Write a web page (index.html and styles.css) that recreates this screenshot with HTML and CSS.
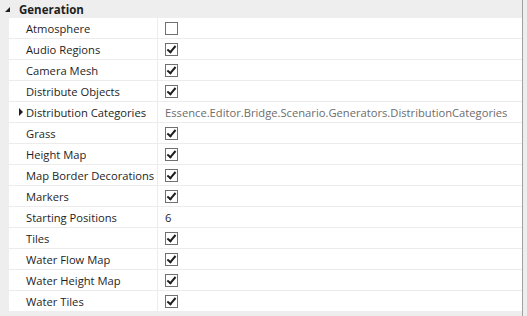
FILE: index.html
```html
<!DOCTYPE html>
<html lang="en">
<head>
  <meta charset="UTF-8">
  <title>Properties</title>
  <link rel="stylesheet" href="styles.css">
</head>
<body>
  <div class="grid">
    <div class="category">
      <span class="expander"></span>
      <span class="category-name">Generation</span>
    </div>
    <div class="rows">
      <div class="row"><div class="name">Atmosphere</div><div class="value"><span class="check"></span></div></div>
      <div class="row"><div class="name">Audio Regions</div><div class="value"><span class="check on"></span></div></div>
      <div class="row"><div class="name">Camera Mesh</div><div class="value"><span class="check on"></span></div></div>
      <div class="row"><div class="name">Distribute Objects</div><div class="value"><span class="check on"></span></div></div>
      <div class="row"><div class="name"><span class="arrow"></span>Distribution Categories</div><div class="value text">Essence.Editor.Bridge.Scenario.Generators.DistributionCategories</div></div>
      <div class="row"><div class="name">Grass</div><div class="value"><span class="check on"></span></div></div>
      <div class="row"><div class="name">Height Map</div><div class="value"><span class="check on"></span></div></div>
      <div class="row"><div class="name">Map Border Decorations</div><div class="value"><span class="check on"></span></div></div>
      <div class="row"><div class="name">Markers</div><div class="value"><span class="check on"></span></div></div>
      <div class="row"><div class="name">Starting Positions</div><div class="value number">6</div></div>
      <div class="row"><div class="name">Tiles</div><div class="value"><span class="check on"></span></div></div>
      <div class="row"><div class="name">Water Flow Map</div><div class="value"><span class="check on"></span></div></div>
      <div class="row"><div class="name">Water Height Map</div><div class="value"><span class="check on"></span></div></div>
      <div class="row"><div class="name">Water Tiles</div><div class="value"><span class="check on"></span></div></div>
    </div>
  </div>
</body>
</html>
```

FILE: styles.css
```css
body {
  margin: 0;
  background: #eeeeee;
  font-family: "Open Sans", "Noto Sans", sans-serif;
  font-size: 11.2px;
  color: #1e1e1e;
}

.grid {
  width: 522px;
  height: 316px;
  background: #eeeeee;
  border-right: 1px solid #a0a0a0;
}

.category {
  height: 18px;
  display: flex;
  align-items: center;
}

.expander {
  width: 0;
  height: 0;
  margin: 0 9px 0 5px;
  border-left: 5px solid transparent;
  border-bottom: 5px solid #1e1e1e;
}

.category-name {
  font-weight: bold;
  font-size: 11.5px;
}

.rows {
  margin-left: 9px;
  background: #ffffff;
}

.row {
  display: flex;
  height: 20px;
  border-bottom: 1px solid #ececec;
}

.row:last-child {
  border-bottom: none;
}

.name {
  width: 149px;
  padding-left: 17px;
  box-sizing: border-box;
  border-right: 1px solid #ececec;
  display: flex;
  align-items: center;
  position: relative;
  white-space: nowrap;
}

.arrow {
  position: absolute;
  left: 10px;
  top: 6px;
  border-top: 4px solid transparent;
  border-bottom: 4px solid transparent;
  border-left: 4px solid #1e1e1e;
}

.value {
  flex: 1;
  display: flex;
  align-items: center;
  padding-left: 7px;
  white-space: nowrap;
}

.value.text {
  color: #6d6d6d;
}

.check {
  width: 11px;
  height: 11px;
  border: 1px solid #707070;
  background: #ffffff;
  position: relative;
}

.check.on::after {
  content: "";
  position: absolute;
  left: 3px;
  top: 0px;
  width: 3px;
  height: 7px;
  border-right: 2px solid #1e1e1e;
  border-bottom: 2px solid #1e1e1e;
  transform: rotate(40deg);
}
```
